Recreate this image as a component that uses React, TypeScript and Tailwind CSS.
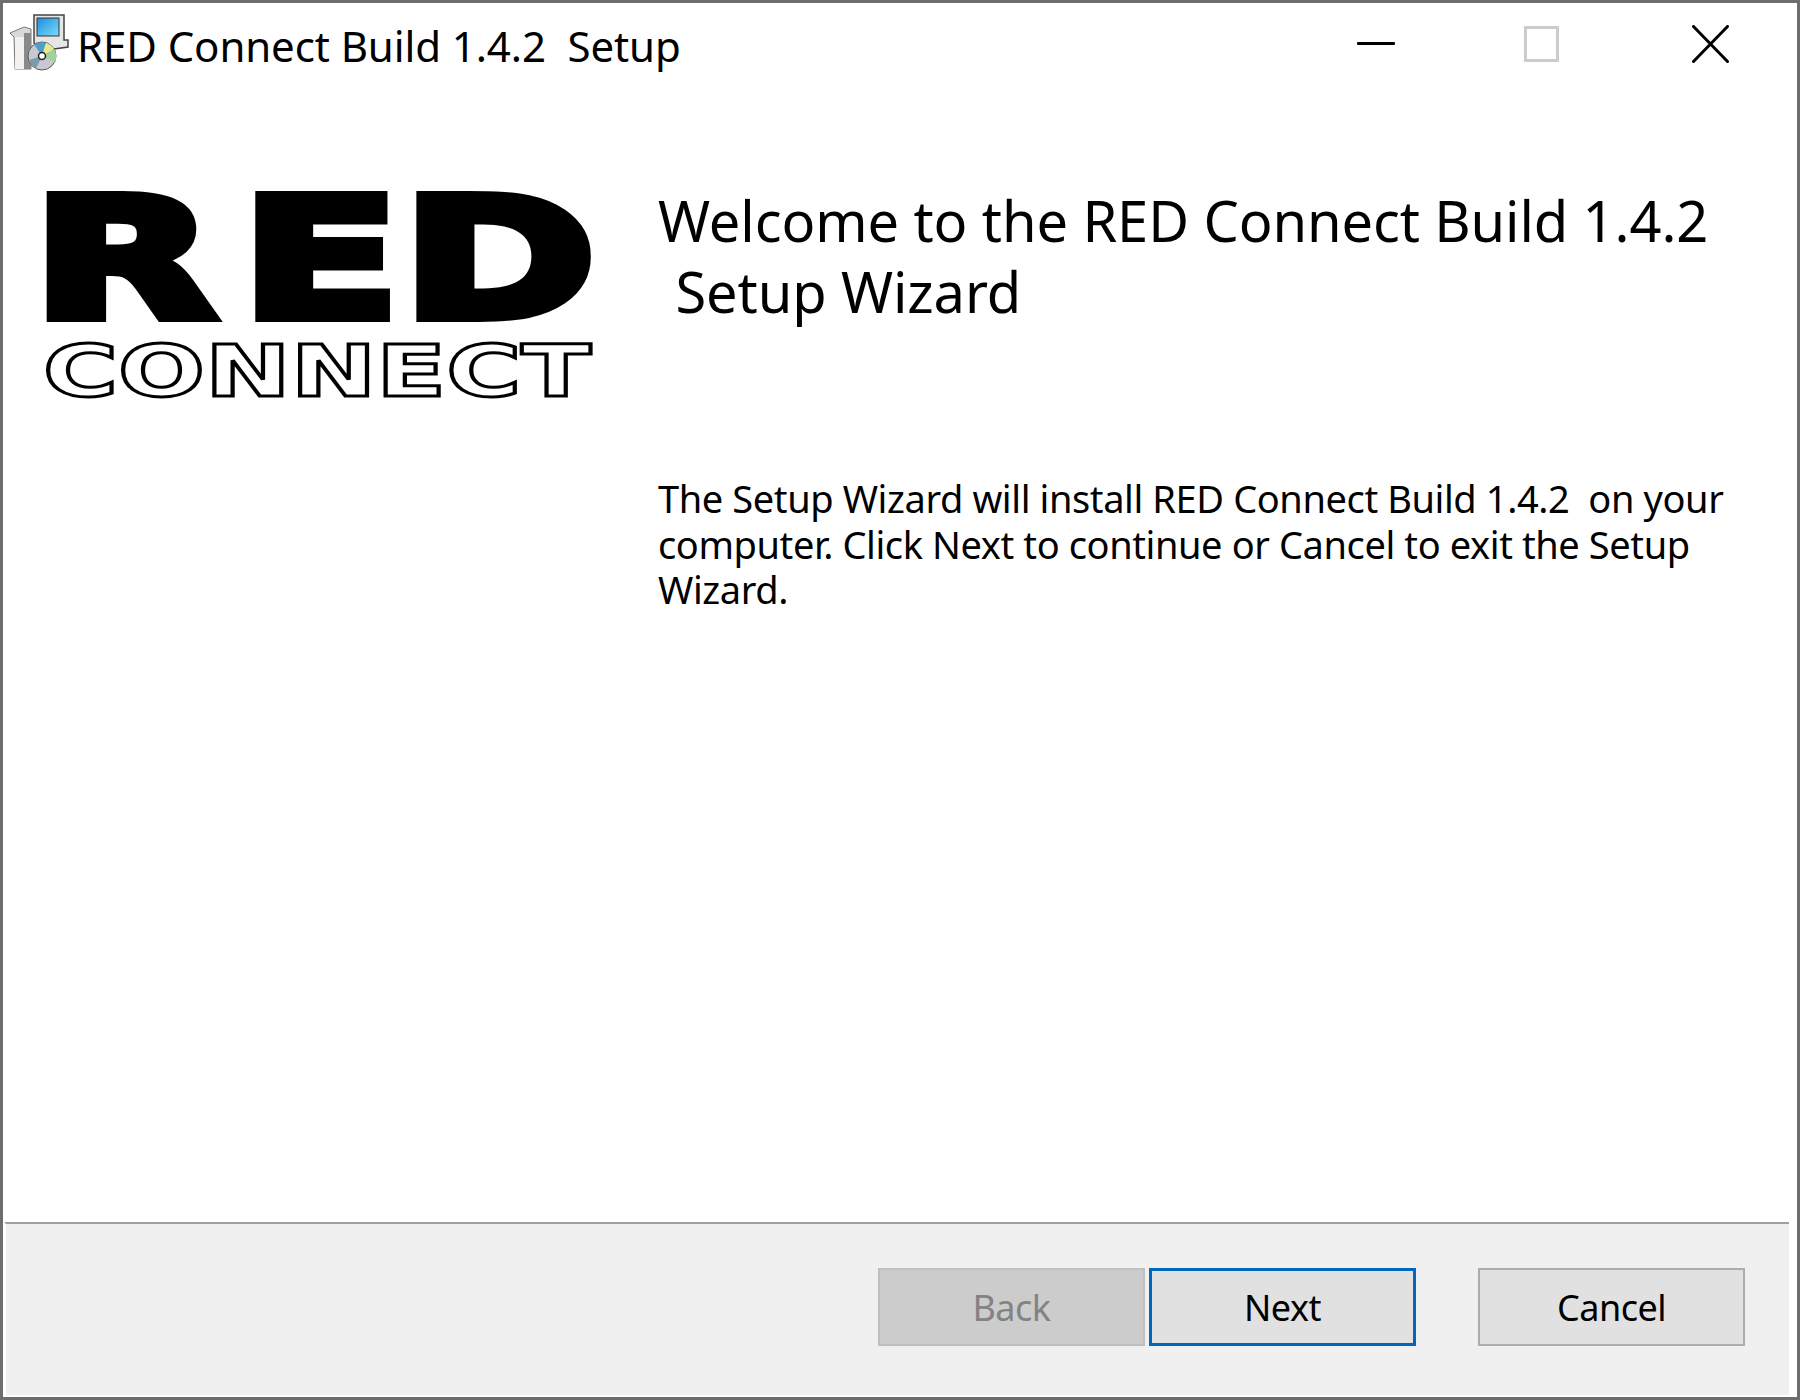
import React from 'react';

const uiFont = "font-['Noto_Sans',sans-serif]";

const InstallerIcon: React.FC = () => (
  <svg width="60" height="60" viewBox="0 0 60 60" className="shrink-0 -mt-[6px]">
    <defs>
      <linearGradient id="screen" x1="0" y1="0" x2="1" y2="1">
        <stop offset="0" stopColor="#1a8fe0" />
        <stop offset="1" stopColor="#7fdcf5" />
      </linearGradient>
    </defs>
    {/* box */}
    <polygon points="0,20 14,14 21,16 21,56 5,56 4,24" fill="#d9d9d9" stroke="#777" strokeWidth="1" />
    <rect x="5" y="24" width="9" height="32" fill="#f2f2f2" />
    <rect x="14" y="20" width="7" height="36" fill="#8a8a8a" />
    {/* monitor */}
    <path d="M24 2 H54 V27 H58 V34 L44 36 H30 L24 30 Z" fill="#e6e6e6" stroke="#444" strokeWidth="1.5" />
    <rect x="27" y="5" width="22" height="18" fill="url(#screen)" stroke="#333" strokeWidth="1" />
    {/* cd */}
    <circle cx="32" cy="43" r="14" fill="#c8c8d0" stroke="#5a5a5a" strokeWidth="1" />
    <path d="M32 43 L24 31.5 A14 14 0 0 1 36 30 Z" fill="#4f9fc9" />
    <path d="M32 43 L36 30 A14 14 0 0 1 44 36 Z" fill="#e6ea8c" />
    <path d="M32 43 L44 36 A14 14 0 0 1 45 49 Z" fill="#9fd39a" />
    <path d="M32 43 L26 55.5 A14 14 0 0 1 19 47 Z" fill="#7f9aa8" />
    <circle cx="32" cy="43" r="3.5" fill="#fff" stroke="#222" strokeWidth="1.5" />
  </svg>
);

const Logo: React.FC = () => (
  <svg width="578" height="260" viewBox="-20 -30 578 260" className="block -mt-[30px] -ml-[20px]">
    <g fontFamily="'DejaVu Sans', sans-serif" fontWeight="700" fill="#000" stroke="#000" strokeWidth="10" strokeLinejoin="miter">
      <text x="-14" y="125" fontSize="165" textLength="184" lengthAdjust="spacingAndGlyphs">R</text>
      <text x="195" y="125" fontSize="165" textLength="159" lengthAdjust="spacingAndGlyphs">E</text>
      <text x="356" y="125" fontSize="165" textLength="194" lengthAdjust="spacingAndGlyphs">D</text>
    </g>
    <text
      x="-3"
      y="204"
      fontFamily="'DejaVu Sans', sans-serif"
      fontWeight="700"
      fontSize="72"
      fill="#fff"
      stroke="#000"
      strokeWidth="3"
      textLength="548"
      lengthAdjust="spacingAndGlyphs"
    >
      CONNECT
    </text>
  </svg>
);

const WindowControls: React.FC = () => (
  <div className="flex items-center mr-[68px] -mt-[5px]">
    <div className="w-[38px] h-[3px] bg-black rounded-[1px]" />
    <div className="ml-[129px] w-[35px] h-[36px] border-[3px] border-[#cccccc]" />
    <svg width="37" height="38" viewBox="0 0 37 38" className="ml-[133px]">
      <path d="M1.5 1.5 L35.5 36.5 M35.5 1.5 L1.5 36.5" stroke="#000" strokeWidth="3" strokeLinecap="round" />
    </svg>
  </div>
);

const WizardButton: React.FC<{ label: string; className: string }> = ({ label, className }) => (
  <button className={`w-[267px] h-[78px] text-[36px] leading-none tracking-[-0.5px] pt-[2px] ${className}`}>{label}</button>
);

export default function App() {
  return (
    <div className={`w-[1800px] h-[1400px] bg-white border-[3px] border-[#6d6d6d] flex flex-col text-black ${uiFont}`}>
      {/* title bar */}
      <div className="h-[86px] flex items-center justify-between pl-[7px]">
        <div className="flex items-center gap-[7px]">
          <InstallerIcon />
          <span className="text-[42px] leading-none tracking-[-0.1px] whitespace-pre">RED Connect Build 1.4.2  Setup</span>
        </div>
        <WindowControls />
      </div>

      {/* body */}
      <div className="flex-1 flex pl-[43px] pt-[103px]">
        <div className="w-[612px] shrink-0">
          <Logo />
        </div>
        <div className="flex-1 pr-[60px]">
          <h1 className="text-[56px] leading-[71px] font-normal tracking-[-0.1px] whitespace-pre -mt-[7px]">
            <span className="block">Welcome to the RED Connect Build 1.4.2</span>
            <span className="block ml-[3px]">{' Setup Wizard'}</span>
          </h1>
          <p className="text-[38px] leading-[45.5px] tracking-[-0.4px] mt-[149px] whitespace-pre">
            {'The Setup Wizard will install RED Connect Build 1.4.2  on your\ncomputer. Click Next to continue or Cancel to exit the Setup\nWizard.'}
          </p>
        </div>
      </div>

      {/* footer */}
      <div className="h-[175px] ml-[1px] mr-[8px] border-t-[2px] border-t-[#a0a0a0] border-l-[2px] border-l-white border-b-[2px] border-b-white bg-[#f0f0f0] flex items-start justify-end pt-[44px] pr-[44px]">
        <WizardButton label="Back" className="bg-[#cccccc] border-[2px] border-[#bfbfbf] text-[#838383]" />
        <WizardButton label="Next" className="ml-[4px] bg-[#e1e1e1] border-[3px] border-[#0067c0]" />
        <WizardButton label="Cancel" className="ml-[62px] bg-[#e1e1e1] border-[2px] border-[#adadad]" />
      </div>
    </div>
  );
}
